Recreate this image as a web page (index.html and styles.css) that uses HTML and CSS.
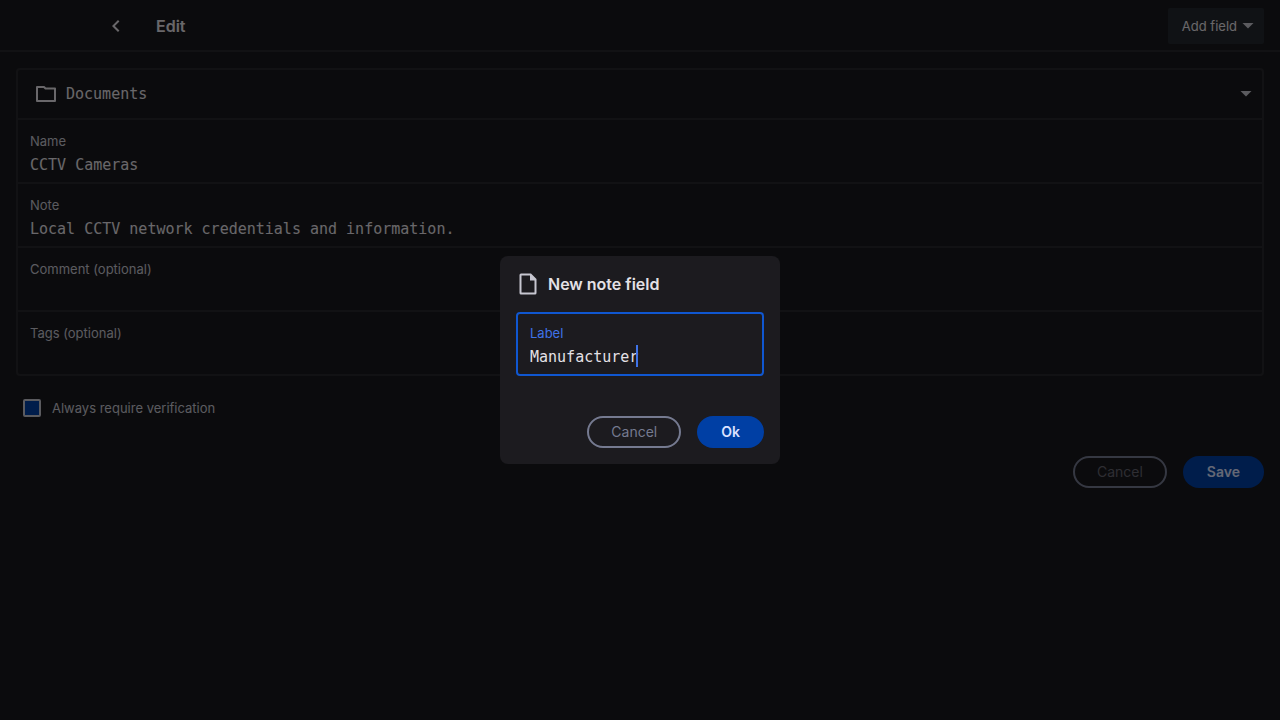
FILE: index.html
```html
<!DOCTYPE html>
<html lang="en">
<head>
    <meta charset="UTF-8">
    <meta name="viewport" content="width=device-width, initial-scale=1.0">
    <title>Edit</title>
    <link rel="stylesheet" href="styles.css">
</head>
<body>
    <header class="toolbar">
        <button class="back-button" type="button" aria-label="Back">
            <svg width="24" height="24" viewBox="0 0 24 24"><path fill="currentColor" d="M15.410 7.410 14 6l-6 6 6 6 1.410-1.410L10.830 12z"/></svg>
        </button>
        <h1>Edit</h1>
        <button class="add-field" type="button">
            Add field
            <svg class="arrow" width="12" height="6" viewBox="0 0 12 6"><path d="M0.500 0h11L6 5.500z" fill="currentColor"/></svg>
        </button>
    </header>

    <main>
        <form>
            <div class="card">
                <div class="group-row">
                    <svg width="24" height="24" viewBox="0 0 24 24" fill="none" stroke="currentColor" stroke-width="2" stroke-linejoin="round"><path d="M3 5h7l1.500 1.500H21V19H3z"/></svg>
                    <select class="group-select" aria-label="Group">
                        <option>Documents</option>
                    </select>
                    <svg class="arrow" width="12" height="6" viewBox="0 0 12 6"><path d="M0.500 0h11L6 5.500z" fill="currentColor"/></svg>
                </div>
                <div class="field">
                    <label for="name">Name</label>
                    <input id="name" type="text" value="CCTV Cameras">
                </div>
                <div class="field">
                    <label for="note">Note</label>
                    <input id="note" type="text" value="Local CCTV network credentials and information.">
                </div>
                <div class="field">
                    <label for="comment">Comment (optional)</label>
                    <input id="comment" type="text">
                </div>
                <div class="field">
                    <label for="tags">Tags (optional)</label>
                    <input id="tags" type="text">
                </div>
            </div>

            <label class="verify">
                <input type="checkbox">
                Always require verification
            </label>

            <div class="actions">
                <button class="btn btn-outline btn-muted" type="button">Cancel</button>
                <button class="btn btn-filled" type="button">Save</button>
            </div>
        </form>
    </main>

    <div class="overlay">
        <div class="dialog" role="dialog" aria-labelledby="dialog-title">
            <h2 id="dialog-title">
                <svg width="24" height="24" viewBox="0 0 24 24"><path fill="currentColor" fill-rule="evenodd" d="M5 1.500h10l5.500 5.500v14a1.500 1.500 0 0 1-1.500 1.500H5A1.500 1.500 0 0 1 3.500 21V3A1.500 1.500 0 0 1 5 1.500zM5.500 3.500v17h13V8.500H14v-5z"/></svg>
                New note field
            </h2>
            <div class="field field-active">
                <label for="label">Label</label>
                <input id="label" type="text" value="Manufacturer">
                <span class="caret"></span>
            </div>
            <div class="actions">
                <button class="btn btn-outline" type="button">Cancel</button>
                <button class="btn btn-filled" type="button">Ok</button>
            </div>
        </div>
    </div>
</body>
</html>
```

FILE: styles.css
```css
* {
    box-sizing: border-box;
}
body {
    margin: 0;
    min-height: 100vh;
    background: #1a1a1e;
    color: #e4e1e6;
    font-family: Inter, "Liberation Sans", sans-serif;
    font-size: 13px;
}
button, input, select {
    font: inherit;
    color: inherit;
}
svg {
    display: block;
    flex: none;
}
.toolbar {
    display: flex;
    align-items: center;
    height: 52px;
    padding: 2px 16px 0 104px;
    border-bottom: 2px solid #29292d;
}
.toolbar h1 {
    flex: 1;
    margin: 0 0 0 28px;
    font-size: 16px;
    font-weight: 600;
}
.back-button {
    padding: 0;
    border: none;
    background: none;
}
.add-field {
    display: flex;
    align-items: center;
    gap: 5px;
    height: 36px;
    padding: 0 10px 0 14px;
    border: none;
    border-radius: 2px;
    background: #24282f;
}
.arrow {
    color: #c6c6d0;
}
main {
    padding: 16px;
}
.card {
    border: 2px solid #29292d;
    border-radius: 4px;
}
.group-row {
    display: flex;
    align-items: center;
    gap: 8px;
    height: 48px;
    padding: 0 10px 0 16px;
}
.group-select {
    flex: 1;
    appearance: none;
    padding: 0;
    border: none;
    background: none;
    font-family: "DejaVu Sans Mono", monospace;
    font-size: 15px;
}
.card .field {
    padding: 11px 12px 5px;
    border-top: 2px solid #29292d;
}
.field label {
    display: block;
    margin-bottom: 2px;
    line-height: 20px;
    color: #c6c6d0;
}
.field input {
    display: block;
    width: 100%;
    height: 24px;
    padding: 0;
    border: none;
    outline: none;
    background: none;
    font-family: "DejaVu Sans Mono", monospace;
    font-size: 15px;
}
.verify {
    display: flex;
    align-items: center;
    gap: 11px;
    height: 32px;
    margin: 16px 7px;
    color: #c6c6d0;
}
.verify input {
    appearance: none;
    width: 18px;
    height: 18px;
    margin: 0;
    border: 2px solid #c6c6d0;
    border-radius: 2px;
    background: #003fa4;
}
.actions {
    display: flex;
    justify-content: flex-end;
    gap: 16px;
}
main .actions {
    margin-top: 32px;
}
.btn {
    height: 32px;
    padding: 0 24px 2px;
    border: none;
    border-radius: 16px;
    font-size: 14px;
}
.btn-outline {
    padding: 0 22px 2px;
    border: 2px solid #757a90;
    background: none;
    color: #757a90;
}
.btn-muted {
    color: #64646f;
}
.btn-filled {
    background: #003fa4;
    color: #dbe1ff;
    font-weight: 600;
}
.overlay {
    position: fixed;
    inset: 0;
    display: flex;
    align-items: center;
    justify-content: center;
    background: rgba(0, 0, 0, 0.54);
}
.dialog {
    width: 280px;
    padding: 16px;
    border-radius: 8px;
    background: #1c1b1f;
}
.dialog h2 {
    display: flex;
    align-items: center;
    gap: 8px;
    height: 24px;
    margin: 0 0 16px;
    font-size: 16px;
    font-weight: 600;
}
.dialog h2 svg {
    color: #c6c6d0;
}
.field-active {
    position: relative;
    padding: 9px 12px 5px;
    border: 2px solid #1057d0;
    border-radius: 4px;
}
.field-active label {
    color: #3f73e8;
}
.field-active input {
    caret-color: transparent;
}
.caret {
    position: absolute;
    left: 118px;
    bottom: 7px;
    width: 2px;
    height: 22px;
    background: #3f73e8;
}
.dialog .actions {
    margin-top: 40px;
}
```
